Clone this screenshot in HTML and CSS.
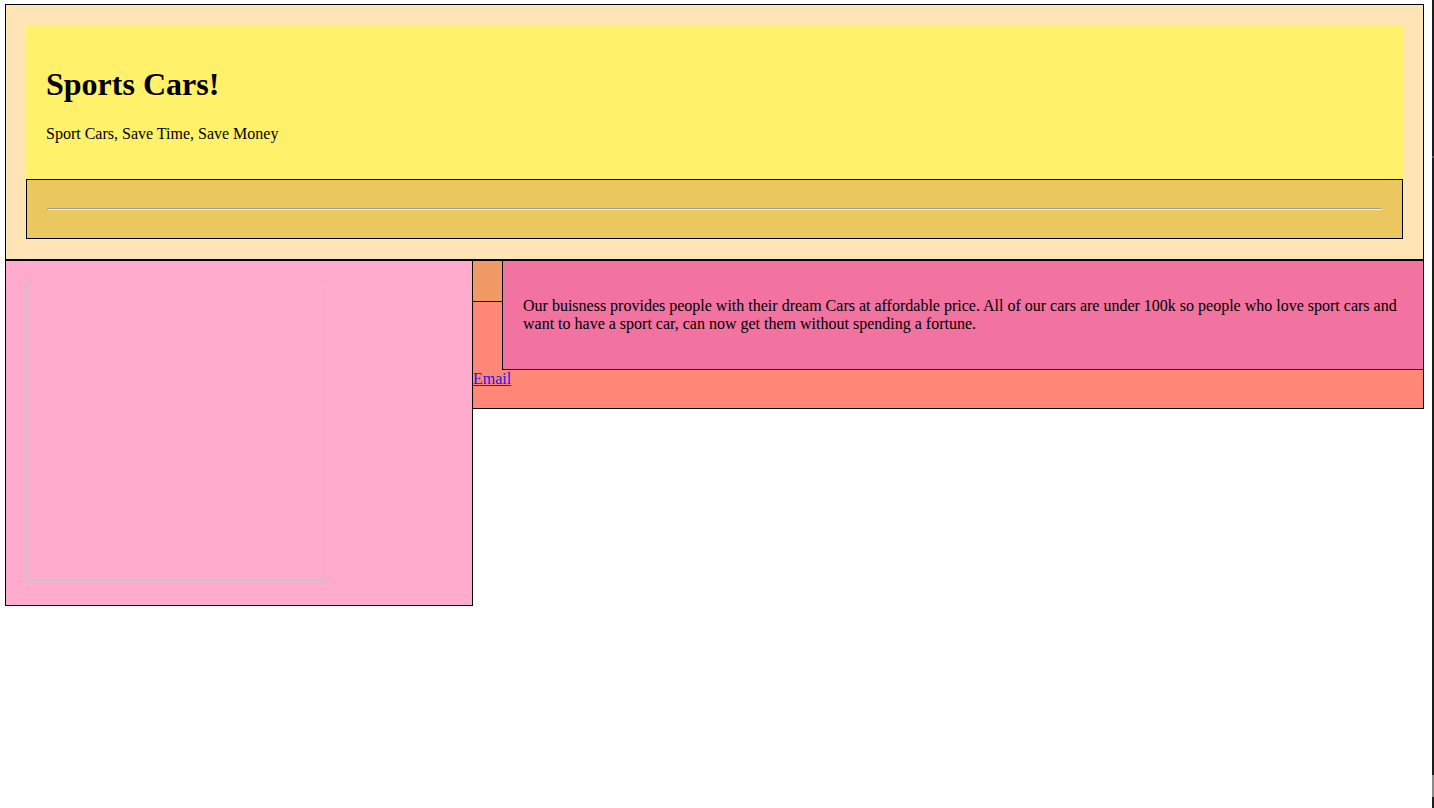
FILE: index.html
```html
<!DOCTYPE html>
<html lang="en">
<head>
<meta charset="utf-8">
<title>Sports Cars!</title>
<link rel="stylesheet" href="styles.css">
</head>
<body>
<header class="site-header">
  <div class="banner">
    <h1 class="title">Sports Cars!</h1>
    <p class="tagline">Sport Cars, Save Time, Save Money</p>
  </div>
  <nav class="nav">
    <hr>
  </nav>
</header>
<main class="main">
  <aside class="aside">
    <div class="frame"></div>
  </aside>
  <section class="content">
    <div class="row">
      <div class="side-box"></div>
      <article class="article">
        <p class="text">Our buisness provides people with their dream Cars at affordable price. All of our cars are under 100k so people who love sport cars and want to have a sport car, can now get them without spending a fortune.</p>
      </article>
    </div>
    <footer class="footer"><a class="email" href="#">Email</a></footer>
  </section>
</main>
<div class="edge"><span class="edge-mark"></span><span class="edge-low"></span></div>
</body>
</html>
```

FILE: styles.css
```css
html {
  background: #ffffff;
}

body {
  margin: 4px 10px 0 5px;
  font-family: "Liberation Serif", "Times New Roman", serif;
  font-size: 16px;
  color: #000;
}

.site-header {
  background: #ffe4b5;
  border: 1px solid #000;
  padding: 20px;
}

.banner {
  background: #fff16a;
  padding: 20px;
}

.title {
  font-size: 32px;
  font-weight: bold;
  margin: 21.44px 0;
}

.tagline {
  margin: 16px 0;
}

.nav {
  background: #ebc760;
  border: 1px solid #000;
  padding: 20px;
}

.nav hr {
  margin: 8px 0;
}

.main {
  display: flex;
  align-items: flex-start;
}

.aside {
  box-sizing: border-box;
  width: 468px;
  flex: none;
  background: #ffabcd;
  border: 1px solid #000;
  padding: 20px;
}

.frame {
  display: inline-block;
  box-sizing: border-box;
  width: 300px;
  height: 300px;
  border: 1px solid #c4c4c4;
}

.content {
  flex: 1;
  margin-left: -1px;
  background: #ff8777;
  border: 1px solid #000;
}

.row {
  display: flex;
  align-items: flex-start;
}

.side-box {
  flex: none;
  width: 29px;
  height: 40px;
  background: #f09a66;
  border-bottom: 1px solid #000;
}

.article {
  flex: 1;
  background: #f272a0;
  border-left: 1px solid #000;
  border-bottom: 1px solid #000;
  padding: 20px;
}

.text {
  margin: 16px 0;
}

.footer {
  padding-bottom: 20px;
}

.email {
  color: #2a14ee;
}

.edge {
  position: fixed;
  top: 0;
  right: 0;
  width: 2px;
  height: 100%;
  background: #1d1d1b;
}

.edge-mark {
  position: absolute;
  top: 156px;
  left: 0;
  width: 2px;
  height: 2px;
  background: #555;
}

.edge-low {
  position: absolute;
  top: 775px;
  left: 0;
  width: 2px;
  height: 22px;
  background: #8a8a8a;
}
```
